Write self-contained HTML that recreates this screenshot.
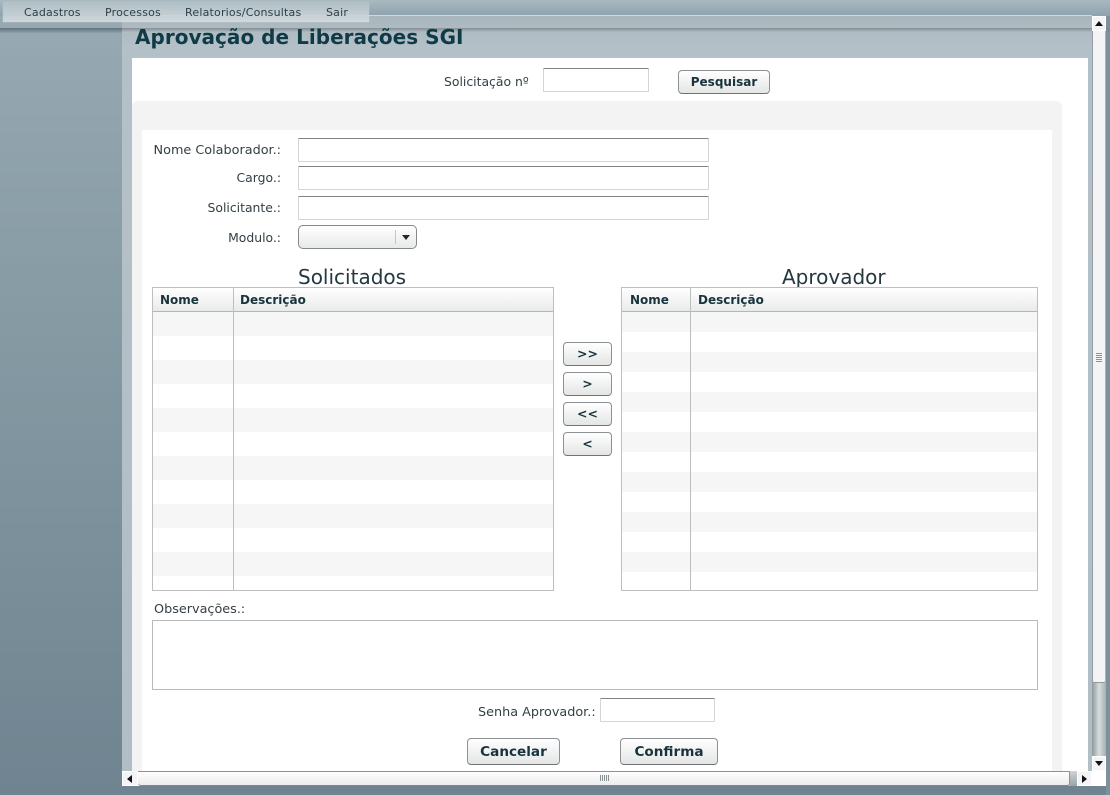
<!DOCTYPE html>
<html><head><meta charset="utf-8"><title>Aprovação de Liberações SGI</title>
<style>
html,body{margin:0;padding:0;width:1110px;height:795px;overflow:hidden;background:#6f8490;font-family:"DejaVu Sans","Liberation Sans",sans-serif;color:#2b3a40}
div,span,input{position:absolute;box-sizing:border-box}
.lb{font-size:12.8px;line-height:16px;white-space:nowrap;color:#333f44;text-align:right}
.in{background:#fff;border:1px solid #d4d6d6;border-top:1px solid #7d8386;border-radius:1px}
.btn{background:linear-gradient(#fff,#e4e5e5);border:1px solid #8b9194;border-bottom:1px solid #6f7477;border-radius:4px;font-weight:bold;color:#17343c;text-align:center;white-space:nowrap}
.tb{border:1px solid #bcbfbf;background:#fff;overflow:hidden}
.hd{left:0;top:0;right:0;height:24px;background:linear-gradient(#fff,#e9eaea);border-bottom:1px solid #b4b7b7}
.th{top:4px;font-size:12px;line-height:16px;font-weight:bold;color:#17343c}
.st{left:0;right:0;background:#f6f6f6}
.sb{background:#f4f3f5;border:1px solid #fff}
.ar{width:0;height:0}
.mn{top:4px;font-size:11px;line-height:16px;color:#2e4048;white-space:nowrap;letter-spacing:.2px;padding-top:1px}
</style></head><body>

<div style="left:0;top:0;width:122px;height:795px;background:linear-gradient(#98aab4 0,#889ca6 280px,#6f8490 795px)"></div>
<div style="left:0;top:0;width:1110px;height:16px;background:linear-gradient(#a9b9c0,#8ea2ad)"></div>
<div style="left:122px;top:16px;width:970px;height:755px;background:linear-gradient(#aab6bd 0,#b4c0c7 30px,#b2bec5 100%)"></div>
<div style="left:122px;top:15px;width:970px;height:1px;background:#cfdadd"></div>
<div style="left:122px;top:28px;width:970px;height:4px;background:linear-gradient(#848f93,#9aa6ab 60%,#afbbc2)"></div>
<div style="left:0;top:28px;width:122px;height:5px;background:linear-gradient(#5f707a,#8fa2ab)"></div>
<div style="left:1106px;top:16px;width:4px;height:779px;background:#7d919b"></div>
<div style="left:1092px;top:28px;width:18px;height:4px;background:#7a8b93"></div>

<!-- white panel -->
<div style="left:132px;top:58px;width:956px;height:713px;background:#fff"></div>
<div style="left:132px;top:101px;width:930px;height:670px;background:#f3f3f3;border-radius:6px 6px 0 0"></div>
<div style="left:142px;top:130px;width:910px;height:641px;background:#fff"></div>

<div style="left:135px;top:24px;font-size:20px;line-height:26px;font-weight:bold;color:#0f3b47;white-space:nowrap;letter-spacing:.02px">Aprovação de Liberações SGI</div>

<!-- top search -->
<div class="lb" style="left:444px;top:74px;font-size:12.4px">Solicitação nº</div>
<div class="in" style="left:543px;top:68px;width:106px;height:24px"></div>
<div class="btn" style="left:678px;top:70px;width:92px;height:24px;font-size:12px;line-height:22px">Pesquisar</div>

<!-- form -->
<div class="lb" style="left:130px;width:151px;top:143px">Nome Colaborador.:</div>
<div class="in" style="left:298px;top:138px;width:411px;height:24px"></div>
<div class="lb" style="left:130px;width:151px;top:170px;font-size:12.4px">Cargo.:</div>
<div class="in" style="left:298px;top:166px;width:411px;height:24px"></div>
<div class="lb" style="left:130px;width:151px;top:200px;font-size:12.4px">Solicitante.:</div>
<div class="in" style="left:298px;top:196px;width:411px;height:24px"></div>
<div class="lb" style="left:130px;width:151px;top:230px;font-size:12.4px">Modulo.:</div>
<div style="left:298px;top:225px;width:119px;height:24px;background:linear-gradient(#fff,#e8e9e9);border:1px solid #84898c;border-radius:5px"></div>
<div style="left:395px;top:230px;width:1px;height:14px;background:#c4c6c6"></div>
<div class="ar" style="left:402px;top:235px;border-left:4px solid transparent;border-right:4px solid transparent;border-top:5px solid #1d2a2e"></div>

<div style="left:298px;top:265px;font-size:20px;line-height:24px;color:#24383f;white-space:nowrap">Solicitados</div>
<div style="left:782px;top:265px;font-size:20px;line-height:24px;color:#24383f;white-space:nowrap">Aprovador</div>

<!-- left table -->
<div class="tb" style="left:152px;top:287px;width:402px;height:304px">
<div class="st" style="top:24px;height:24px"></div>
<div class="st" style="top:72px;height:24px"></div>
<div class="st" style="top:120px;height:24px"></div>
<div class="st" style="top:168px;height:24px"></div>
<div class="st" style="top:216px;height:24px"></div>
<div class="st" style="top:264px;height:24px"></div>
<div class="hd"></div>
<div style="left:80px;top:0;width:1px;bottom:0;background:#bcbfbf"></div>
<div class="th" style="left:7px">Nome</div>
<div class="th" style="left:87px">Descrição</div>
</div>

<!-- right table -->
<div class="tb" style="left:621px;top:287px;width:417px;height:304px">
<div class="st" style="top:24px;height:20px"></div>
<div class="st" style="top:64px;height:20px"></div>
<div class="st" style="top:104px;height:20px"></div>
<div class="st" style="top:144px;height:20px"></div>
<div class="st" style="top:184px;height:20px"></div>
<div class="st" style="top:224px;height:20px"></div>
<div class="st" style="top:264px;height:20px"></div>
<div class="hd"></div>
<div style="left:68px;top:0;width:1px;bottom:0;background:#bcbfbf"></div>
<div class="th" style="left:8px">Nome</div>
<div class="th" style="left:76px">Descrição</div>
</div>

<!-- move buttons -->
<div class="btn" style="left:563px;top:342px;width:49px;height:24px;font-size:12.5px;line-height:22px">&gt;&gt;</div>
<div class="btn" style="left:563px;top:372px;width:49px;height:24px;font-size:12.5px;line-height:22px">&gt;</div>
<div class="btn" style="left:563px;top:402px;width:49px;height:24px;font-size:12.5px;line-height:22px">&lt;&lt;</div>
<div class="btn" style="left:563px;top:432px;width:49px;height:24px;font-size:12.5px;line-height:22px">&lt;</div>

<div class="lb" style="left:154px;top:602px">Observações.:</div>
<div style="left:152px;top:620px;width:886px;height:70px;background:#fff;border:1px solid #b9bcbc"></div>

<div class="lb" style="left:478px;top:705px">Senha Aprovador.:</div>
<div class="in" style="left:600px;top:698px;width:115px;height:24px"></div>
<div class="btn" style="left:467px;top:738px;width:93px;height:27px;font-size:13.6px;line-height:26px">Cancelar</div>
<div class="btn" style="left:620px;top:738px;width:98px;height:27px;font-size:13.6px;line-height:26px">Confirma</div>

<!-- vertical scrollbar -->
<div style="left:1092px;top:16px;width:14px;height:755px;background:linear-gradient(90deg,#8d999e,#d8dcdd 50%,#a5afb3)"></div>
<div class="sb" style="left:1092px;top:16px;width:14px;height:15px"></div>
<div class="ar" style="left:1095px;top:21px;border-left:4px solid transparent;border-right:4px solid transparent;border-bottom:5px solid #111"></div>
<div class="sb" style="left:1093px;top:31px;width:12px;height:652px;border:0;border-bottom:1px solid #8f999d;border-radius:0 0 2px 2px"></div>
<div style="left:1096px;top:353px;width:6px;height:9px;background:repeating-linear-gradient(#8b9295 0,#8b9295 1px,#f4f3f5 1px,#f4f3f5 2px)"></div>
<div class="sb" style="left:1092px;top:756px;width:14px;height:15px"></div>
<div class="ar" style="left:1095px;top:761px;border-left:4px solid transparent;border-right:4px solid transparent;border-top:5px solid #111"></div>

<!-- horizontal scrollbar -->
<div style="left:122px;top:771px;width:970px;height:15px;background:linear-gradient(90deg,#eee,#eee 90%,#a4adb0);border-top:1px solid #8a9396"></div>
<div style="left:1070px;top:771px;width:7px;height:15px;background:linear-gradient(#cfd4d6,#98a3a8)"></div>
<div style="left:138px;top:771px;width:932px;height:15px;background:linear-gradient(#fff,#ececec);border-top:1px solid #8a9396;border-bottom:1px solid #7e878a;border-right:1px solid #8a9396;border-radius:0 0 3px 3px"></div>
<div style="left:600px;top:775px;width:9px;height:6px;background:repeating-linear-gradient(90deg,#8b9295 0,#8b9295 1px,#f4f3f5 1px,#f4f3f5 2px)"></div>
<div class="sb" style="left:122px;top:771px;width:16px;height:15px"></div>
<div class="ar" style="left:127px;top:775px;border-top:4px solid transparent;border-bottom:4px solid transparent;border-right:5px solid #111"></div>
<div class="sb" style="left:1077px;top:771px;width:15px;height:15px"></div>
<div class="ar" style="left:1082px;top:775px;border-top:4px solid transparent;border-bottom:4px solid transparent;border-left:5px solid #111"></div>
<div style="left:1092px;top:771px;width:14px;height:15px;background:#fff"></div>

<!-- menu -->
<div style="left:3px;top:2px;width:366px;height:20px;background:linear-gradient(rgba(178,192,199,.9),rgba(212,220,223,.9));box-shadow:0 0 1px rgba(255,255,255,.5)"></div>
<div class="mn" style="left:24px">Cadastros</div>
<div class="mn" style="left:105px">Processos</div>
<div class="mn" style="left:185px">Relatorios/Consultas</div>
<div class="mn" style="left:326px">Sair</div>

</body></html>
